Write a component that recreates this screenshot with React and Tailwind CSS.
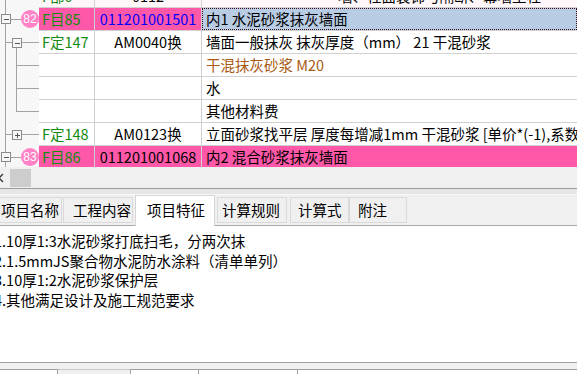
import React from 'react';

const LINE = '#a3a3a3';

function TreeCell({ kind, badge }) {
  return (
    <div className="relative w-[39px] h-[23px] shrink-0 bg-[#f7f7f7]">
      <svg width="39" height="23" className="block" shapeRendering="crispEdges">
        <line x1="5.5" y1="0" x2="5.5" y2="23" stroke={LINE} />
        {(kind === 'l0') && (
          <g>
            <line x1="11" y1="11.5" x2="22" y2="11.5" stroke={LINE} />
            <rect x="1.5" y="6.5" width="9" height="9" fill="#f7f7f7" stroke="#8a8a8a" />
            <line x1="3.5" y1="11.5" x2="9" y2="11.5" stroke="#555" />
          </g>
        )}
        {(kind === 'open' || kind === 'closed') && (
          <g>
            <line x1="5.5" y1="11.5" x2="12" y2="11.5" stroke={LINE} />
            <line x1="21" y1="11.5" x2="39" y2="11.5" stroke={LINE} />
            {kind === 'open' && <line x1="16.5" y1="16" x2="16.5" y2="23" stroke={LINE} />}
            <rect x="12.5" y="7.5" width="9" height="9" fill="#f7f7f7" stroke="#8a8a8a" />
            <line x1="14.5" y1="12" x2="20" y2="12" stroke="#555" />
            {kind === 'closed' && <line x1="17" y1="9.5" x2="17" y2="15" stroke="#555" />}
          </g>
        )}
        {(kind === 'child' || kind === 'last') && (
          <g>
            <line x1="16.5" y1="0" x2="16.5" y2={kind === 'last' ? 11.5 : 23} stroke={LINE} />
            <line x1="16.5" y1="11.5" x2="39" y2="11.5" stroke={LINE} />
          </g>
        )}
      </svg>
      {badge && (
        <div className="absolute left-[21px] top-[2px] w-[18px] h-[18px] rounded-full bg-[#ff82c6] text-white text-[12px] leading-[18px] text-center font-['Liberation_Sans',sans-serif]">
          {badge}
        </div>
      )}
    </div>
  );
}

const rows = [
  { tree: 'top', a: 'F部0', b: '0112', c: '墙、柱面装饰与隔断、幕墙工程', cls: 'pl-[136px]', bg: 'bg-[#fff6f9]' },
  { tree: 'l0', badge: '82', a: 'F目85', b: '011201001501', bColor: 'text-[#0000ff]', c: '内1 水泥砂浆抹灰墙面', bg: 'bg-[#ff58a8]', selected: true },
  { tree: 'open', a: 'F定147', b: 'AM0040换', c: '墙面一般抹灰 抹灰厚度（mm） 21 干混砂浆' },
  { tree: 'child', a: '', b: '', c: '干混抹灰砂浆 M20', cColor: 'text-[#a85a14]' },
  { tree: 'child', a: '', b: '', c: '水' },
  { tree: 'last', a: '', b: '', c: '其他材料费' },
  { tree: 'closed', a: 'F定148', b: 'AM0123换', c: '立面砂浆找平层 厚度每增减1mm 干混砂浆 [单价*(-1),系数0.5]' },
  { tree: 'l0', badge: '83', a: 'F目86', b: '011201001068', c: '内2 混合砂浆抹灰墙面', bg: 'bg-[#ff58a8]', cBg: 'bg-[#ff58a8]' },
];

function Row({ r, first }) {
  const bg = r.bg || 'bg-white';
  return (
    <div className={`flex h-[23px] shrink-0 ${first ? '-mt-[15px]' : ''}`}>
      <TreeCell kind={r.tree} badge={r.badge} />
      <div className={`w-[56px] shrink-0 border-r border-b border-[#d0d0d0] pl-[3px] text-[#118a11] ${bg}`}>{r.a}</div>
      <div className={`w-[107px] shrink-0 border-r border-b border-[#d0d0d0] text-center ${r.bColor || 'text-black'} ${bg}`}>{r.b}</div>
      {r.selected ? (
        <div className="flex-1 min-w-0 border-b border-[#d0d0d0] bg-[#ff58a8]">
          <div className="h-[22px] bg-[#b8cce4] border border-dotted border-[#3a0a1a] pl-[3px] leading-[20px] whitespace-nowrap">{r.c}</div>
        </div>
      ) : (
        <div className={`flex-1 min-w-0 border-b border-[#d0d0d0] pl-[4px] whitespace-nowrap overflow-hidden ${r.cls || ''} ${r.cColor || 'text-black'} ${r.cBg || bg}`}>{r.c}</div>
      )}
    </div>
  );
}

const tabs = [
  { t: '项目名称', w: 'w-[70px] -ml-[8px] pl-[8px]' },
  { t: '工程内容', w: 'w-[70px] ml-[1px] pl-[9px]' },
  { t: '项目特征', w: 'w-[80px] ml-[2px] pl-[11px]', active: true },
  { t: '计算规则', w: 'w-[70px] ml-[2px] pl-[4px]' },
  { t: '计算式', w: 'w-[59px] ml-[3px] pl-[7px]' },
  { t: '附注', w: 'w-[58px] pl-[8px]' },
];

const lines = [
  '1.10厚1:3水泥砂浆打底扫毛，分两次抹',
  '2.1.5mmJS聚合物水泥防水涂料（清单单列）',
  '3.10厚1:2水泥砂浆保护层',
  '4.其他满足设计及施工规范要求',
];

export default function App() {
  return (
    <div className="w-[577px] h-[374px] overflow-hidden bg-[#f0f0f0] flex flex-col font-['Noto_Sans_CJK_SC',sans-serif] text-[14.5px] leading-[22px] text-black">
      <div className="h-[167px] shrink-0 overflow-hidden flex flex-col bg-white">
        {rows.map((r, i) => (
          <Row key={i} r={r} first={i === 0} />
        ))}
      </div>

      <div className="h-[21px] shrink-0 flex items-center bg-[#f0f0f0]">
        <svg width="6" height="10" className="-ml-[2px]">
          <path d="M5 1 L1 5 L5 9" stroke="#333" strokeWidth="1.3" fill="none" />
        </svg>
        <div className="ml-[6px] w-[21px] h-[18px] bg-[#cdcdcd]" />
      </div>

      <div className="h-[7px] shrink-0 border-t border-[#9c9c9c] bg-[#e6e6e6] border-b border-b-[#f7f7f7]" />

      <div className="h-[31px] shrink-0 flex items-end border-b border-[#a8a8a8]">
        {tabs.map((tab) =>
          tab.active ? (
            <div key={tab.t} className={`${tab.w} shrink-0 h-[31px] -mb-[1px] bg-white border border-b-0 border-[#d6d6d6] leading-[28px]`}>{tab.t}</div>
          ) : (
            <div key={tab.t} className={`${tab.w} shrink-0 h-[26px] mb-[2px] bg-[#f0f0f0] border border-[#dadada] leading-[24px]`}>{tab.t}</div>
          )
        )}
      </div>

      <div className="flex-1 bg-white pt-[5px] -ml-[6px] leading-[19.5px] border-b border-[#a0a0a0]">
        {lines.map((l) => (
          <div key={l} className="whitespace-nowrap">{l}</div>
        ))}
      </div>

      <div className="h-[11px] shrink-0 flex items-end">
        <div className="w-[58px] h-[5px] bg-white border-t border-r border-[#a0a0a0]" />
        <div className="w-[72px] h-[5px] border-t border-[#c8c8c8]" />
        <div className="w-[69px] h-[5px] bg-white border-t border-x border-[#a0a0a0]" />
        <div className="w-[99px] h-[5px] bg-white border-t border-r border-[#a0a0a0]" />
        <div className="flex-1 h-[5px] bg-white border-t border-[#a0a0a0]" />
      </div>
    </div>
  );
}
